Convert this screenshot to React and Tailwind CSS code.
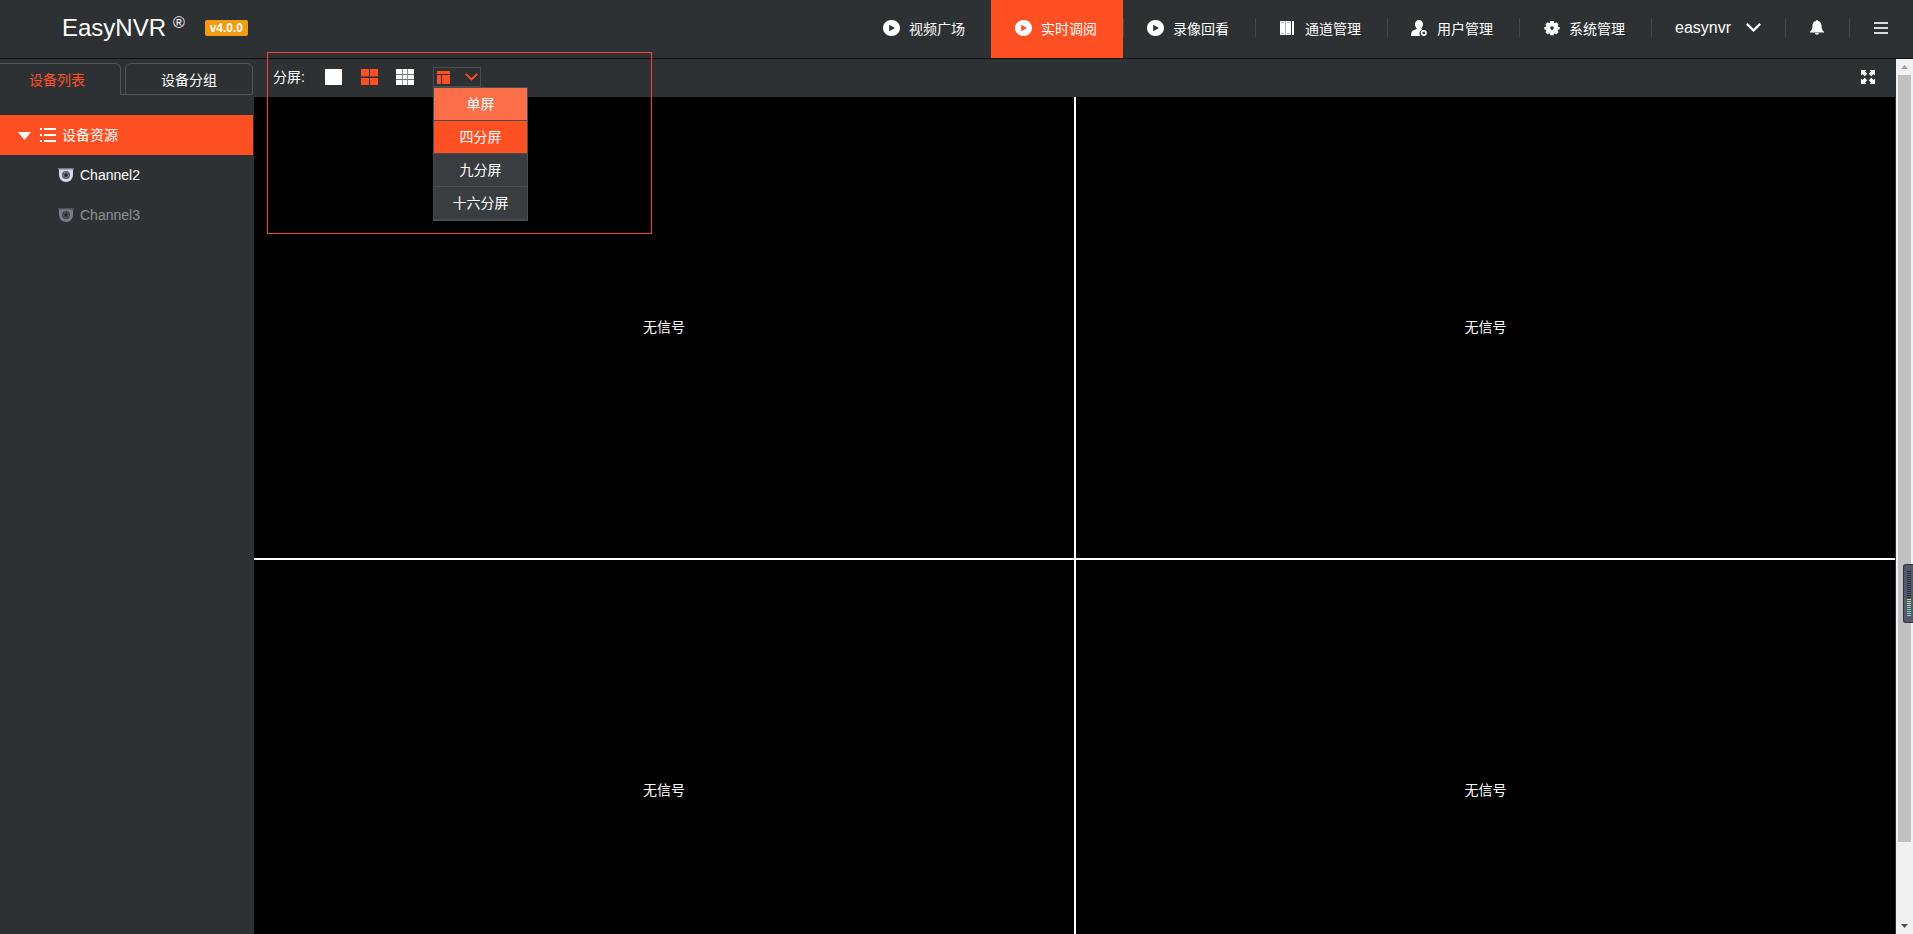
import React from "react";

const navItems = [
  { label: "视频广场", icon: PlayIcon },
  { label: "实时调阅", icon: PlayIcon, active: true },
  { label: "录像回看", icon: PlayIcon, divider: true },
  { label: "通道管理", icon: ChannelIcon, divider: true },
  { label: "用户管理", icon: UserIcon, divider: true },
  { label: "系统管理", icon: GearIcon, divider: true },
];

const channels = [
  { name: "Channel2", online: true },
  { name: "Channel3", online: false },
];

const splitOptions = [
  { label: "单屏", color: "bg-[#fa6e49]" },
  { label: "四分屏", color: "bg-[#ff5023]" },
  { label: "九分屏", color: "bg-[#393d40]" },
  { label: "十六分屏", color: "bg-[#393d40]" },
];

function PlayIcon() {
  return (
    <svg width="17" height="16" viewBox="0 0 17 16" fill="currentColor">
      <path fillRule="evenodd" d="M8.500 0C13.200 0 17 3.500 17 8s-3.800 8-8.500 8S0 12.500 0 8s3.800-8 8.500-8ZM6.200 4.800v6.400L12 8Z" />
    </svg>
  );
}

function ChannelIcon() {
  return (
    <svg width="15" height="14" viewBox="0 0 15 14" shapeRendering="crispEdges">
      <path d="M0 0h5v14H0ZM6 0h5v14H6ZM12 0h2v14h-2Z" fill="#fff" />
      <path d="M5 0h1v14H5Z" fill="#b4b6b8" />
      <path d="M1 1h3v1H1ZM7 1h3v1H7ZM1 12h3v1H1ZM7 12h3v1H7Z" fill="#c9cbcc" />
    </svg>
  );
}

function UserIcon() {
  return (
    <svg width="17" height="16" viewBox="0 0 17 16" fill="currentColor">
      <path d="M8 0c2.500 0 4 1.800 4 4.200 0 1.700-.7 3.200-1.700 4.200v.8l1.200.6A3.800 3.800 0 0 0 9.300 16H0c0-3.500.8-5 3-5.900l2.700-1.100v-.6C4.700 7.400 4 5.900 4 4.200 4 1.800 5.500 0 8 0Z" />
      <circle cx="12.800" cy="13" r="2.200" fill="none" stroke="currentColor" strokeWidth="1.700" />
    </svg>
  );
}

function GearIcon() {
  return (
    <svg width="16" height="16" viewBox="0 0 16 16" fill="currentColor">
      <path
        fillRule="evenodd"
        d="M6.300 1h3.400l.4 1.700 1 .4 1.500-.9 1.900 2-.8 1.500.5 1L15.700 7v2.400l-1.500.4-.5 1 .8 1.500-1.900 2-1.500-.9-1 .4-.4 1.400H6.300l-.4-1.400-1-.4-1.500.9-1.900-2 .8-1.500-.5-1L.3 9.400V7l1.500-.3.5-1-.8-1.500 1.900-2 1.500.9 1-.4ZM8 6.300a1.800 1.800 0 1 0 0 3.600 1.800 1.800 0 0 0 0-3.600Z"
      />
    </svg>
  );
}

function BellIcon() {
  return (
    <svg width="14" height="15" viewBox="0 0 14 15" fill="currentColor">
      <path d="M6 1a1 1 0 0 1 2 0c2.300.5 3.500 2.300 3.500 4.500 0 3 .8 5 2.500 6.200v.8H0v-.8c1.700-1.200 2.500-3.200 2.500-6.200C2.500 3.300 3.700 1.500 6 1ZM5 13h4a2 1.800 0 0 1-4 0Z" />
    </svg>
  );
}

function FullscreenIcon() {
  return (
    <svg width="14" height="14" viewBox="0 0 14 14" fill="currentColor">
      <path d="M0 0h5.500L4 1.500l2.200 2.200-2.500 2.500L1.500 4 0 5.500ZM14 0v5.500L12.500 4l-2.200 2.200-2.500-2.500L10 1.500 8.500 0ZM0 14V8.500L1.500 10l2.200-2.200 2.500 2.500L4 12.500 5.500 14ZM14 14H8.500l1.500-1.500-2.200-2.200 2.500-2.500 2.200 2.200L14 8.500Z" />
    </svg>
  );
}

function ChevronIcon({ width, height }) {
  return (
    <svg width={width} height={height} viewBox="0 0 15 9" fill="none" stroke="currentColor" strokeWidth="2.200">
      <path d="M.8.900 7.500 7.400 14.200.9" />
    </svg>
  );
}

function ListIcon() {
  return (
    <svg width="16" height="14" viewBox="0 0 16 14" fill="currentColor" shapeRendering="crispEdges">
      <path d="M0 0h2v2H0ZM4 0h12v2H4ZM0 6h2v2H0ZM4 6h12v2H4ZM0 12h2v2H0ZM4 12h12v2H4Z" />
    </svg>
  );
}

function CameraIcon() {
  return (
    <svg width="16" height="14" viewBox="0 0 16 14">
      <path d="M1 1h14v5.500C15 11 12 14 8 14S1 11 1 6.500Z" fill="#d4d5ee" />
      <path d="M0 0h16v1.500H0Z" fill="#777a86" />
      <circle cx="8" cy="7" r="4" fill="#53565d" />
      <circle cx="8" cy="7" r="2.600" fill="none" stroke="#a9abba" strokeWidth=".7" strokeDasharray="2 1.200" />
      <circle cx="8" cy="7" r="1.500" fill="#24272b" />
    </svg>
  );
}

function GridFourIcon() {
  return (
    <svg width="17" height="16" viewBox="0 0 17 16" fill="#ff5023" shapeRendering="crispEdges">
      <path d="M0 0h8v7H0ZM9 0h8v7H9ZM0 9h8v7H0ZM9 9h8v7H9Z" />
      <path d="M0 7h8v1H0ZM9 7h8v1H9Z" fill="#8a3a2b" />
    </svg>
  );
}

function GridNineIcon() {
  return (
    <svg width="18" height="16" viewBox="0 0 18 16" shapeRendering="crispEdges">
      <path d="M0 0h18v16H0Z" fill="#fff" />
      <path d="M0 5h18v1H0ZM0 10h18v1H0Z" fill="#6c7072" />
      <path d="M6 0h1v16H6ZM11 0h1v16h-1Z" fill="#89979c" />
    </svg>
  );
}

function LayoutIcon() {
  return (
    <svg width="13" height="13" viewBox="0 0 13 13" fill="#ff5023" shapeRendering="crispEdges">
      <path d="M0 0h13v3H0ZM0 4h4v9H0ZM5 4h8v9H5Z" />
    </svg>
  );
}

function Divider() {
  return <span className="h-[19px] w-px shrink-0 bg-[#43484b]" />;
}

function Header() {
  return (
    <header className="flex h-[59px] shrink-0 border-b border-[#101214]">
      <div className="flex flex-1 items-start pl-[62px]">
        <h1 className="mt-[10px] text-[24px] leading-[36px]">EasyNVR</h1>
        <span className="ml-[7px] mt-[13px] text-[16px] leading-[20px]">®</span>
        <span className="ml-5 mt-[20px] flex h-4 w-[43px] items-center justify-center rounded-[2px] bg-[#f39c12] text-[12px] font-bold leading-none">
          v4.0.0
        </span>
      </div>
      <nav className="flex">
        {navItems.map(({ label, icon: Icon, active, divider }) => (
          <a key={label} className={`flex w-[132px] items-center pb-[3px] ${active ? "bg-[#ff5023]" : ""}`}>
            {divider ? <Divider /> : <span className="w-px" />}
            <span className="ml-[23px] flex w-[17px] justify-center">
              <Icon />
            </span>
            <span className="ml-[9px] pt-[3px] text-[14px]">{label}</span>
          </a>
        ))}
        <div className="flex w-[134px] items-center pb-[3px]">
          <Divider />
          <span className="ml-[23px] text-[16px] leading-5">easynvr</span>
          <span className="ml-[15px]">
            <ChevronIcon width={15} height={9} />
          </span>
        </div>
        <div className="flex w-16 items-center pb-[3px]">
          <Divider />
          <span className="ml-6">
            <BellIcon />
          </span>
        </div>
        <div className="flex w-16 items-center pb-[3px]">
          <Divider />
          <span className="ml-6 flex w-[14px] flex-col gap-[3px]">
            <i className="h-[2px] bg-[#d9dadb]" />
            <i className="h-[2px] bg-[#d9dadb]" />
            <i className="h-[2px] bg-[#d9dadb]" />
          </span>
        </div>
      </nav>
    </header>
  );
}

function Sidebar() {
  return (
    <aside className="w-[254px] shrink-0 border-r border-[#263238]">
      <div className="mt-1 flex h-8">
        <div className="w-[121px] rounded-tr-[6px] border-r border-t border-[#50555a] pl-[29px] pt-[6px] text-[14px] leading-[21px] text-[#ff5023]">
          设备列表
        </div>
        <div className="w-1 border-b border-[#50555a]" />
        <div className="w-[128px] rounded-t-[6px] border border-[#50555a] pt-[6px] text-center text-[14px] leading-[21px]">
          设备分组
        </div>
      </div>
      <div className="mt-5 flex h-10 items-center bg-[#ff5023] pl-[18px]">
        <svg width="13" height="8" viewBox="0 0 13 8" fill="currentColor" className="mt-[2px]">
          <path d="M0 0h13L6.500 8Z" />
        </svg>
        <span className="ml-[9px]">
          <ListIcon />
        </span>
        <span className="ml-[6px] text-[14px]">设备资源</span>
      </div>
      {channels.map((channel) => (
        <div
          key={channel.name}
          className={`flex h-10 items-center pl-[58px] ${channel.online ? "" : "opacity-45"}`}
        >
          <CameraIcon />
          <span className="ml-[6px] text-[14px]">{channel.name}</span>
        </div>
      ))}
    </aside>
  );
}

function SplitSelect() {
  return (
    <div className="relative ml-[19px] mt-2 flex h-5 w-12 items-center border border-[#484d51] pl-[3px] text-[#ff5023]">
      <LayoutIcon />
      <span className="ml-[15px]">
        <ChevronIcon width={13} height={8} />
      </span>
      <ul className="absolute -left-px top-[19px] z-10 w-[95px] border border-[#484d51] text-center text-[14px] text-white">
        {splitOptions.map((option) => (
          <li key={option.label} className={`h-[33px] border-b border-[#484d51] leading-[32px] ${option.color}`}>
            {option.label}
          </li>
        ))}
      </ul>
    </div>
  );
}

function Toolbar() {
  return (
    <div className="flex h-[38px] items-start border-b border-[#263238] pl-[19px]">
      <span className="mt-[8px] w-[52px] text-[14px] leading-[21px]">分屏:</span>
      <span className="mt-[10px] h-4 w-[17px] bg-white" />
      <span className="ml-[19px] mt-[10px]">
        <GridFourIcon />
      </span>
      <span className="ml-[18px] mt-[10px]">
        <GridNineIcon />
      </span>
      <SplitSelect />
      <span className="ml-auto mr-[20px] mt-[11px]">
        <FullscreenIcon />
      </span>
    </div>
  );
}

function VideoGrid() {
  return (
    <div className="grid grid-cols-[822px_1fr] grid-rows-[463px_463px] bg-black text-[14px]">
      {[0, 1, 2, 3].map((cell) => (
        <div
          key={cell}
          className={`flex items-center justify-center border-b-2 border-white ${cell % 2 === 0 ? "border-r-2" : ""}`}
        >
          无信号
        </div>
      ))}
    </div>
  );
}

function Scrollbar() {
  return (
    <div className="flex w-[17px] shrink-0 flex-col items-center bg-[#f1f1f1]">
      <svg width="17" height="16" viewBox="0 0 17 16" fill="#a3a3a3">
        <path d="M5 10h7L8.500 6Z" />
      </svg>
      <div className="h-[767px] w-[13px] bg-[#c1c1c1]" />
      <svg width="17" height="17" viewBox="0 0 17 17" fill="#505050" className="mt-auto">
        <path d="M5 7h7l-3.500 4Z" />
      </svg>
    </div>
  );
}

// Small level meter docked to the right edge of the screen
function LevelMeter() {
  return (
    <div className="absolute right-0 top-[564px] z-20 h-[59px] w-[10px] rounded-l-[3px] border border-r-0 border-[#30323d] bg-[#555969] pl-[3px] pt-[5px]">
      {Array.from({ length: 23 }, (_, i) => (
        <div
          key={i}
          className={`h-[2px] w-1 border-b ${
            i < 14 ? "border-[#2f313b]" : i < 18 ? "border-[#b5dd85]" : "border-[#72d6bd]"
          }`}
        />
      ))}
    </div>
  );
}

export default function App() {
  return (
    <div className="relative flex h-[934px] w-[1913px] flex-col overflow-hidden bg-[#2d3134] font-['Liberation_Sans','Noto_Sans_CJK_SC',sans-serif] text-white">
      <Header />
      <div className="flex min-h-0 flex-1">
        <Sidebar />
        <main className="flex min-w-0 flex-1 flex-col border-r border-[#263238]">
          <Toolbar />
          <div className="min-h-0 flex-1 overflow-hidden">
            <VideoGrid />
          </div>
        </main>
        <Scrollbar />
      </div>
      <div className="pointer-events-none absolute left-[267px] top-[52px] z-20 h-[182px] w-[385px] border border-[#ff3b3b]" />
      <LevelMeter />
    </div>
  );
}
